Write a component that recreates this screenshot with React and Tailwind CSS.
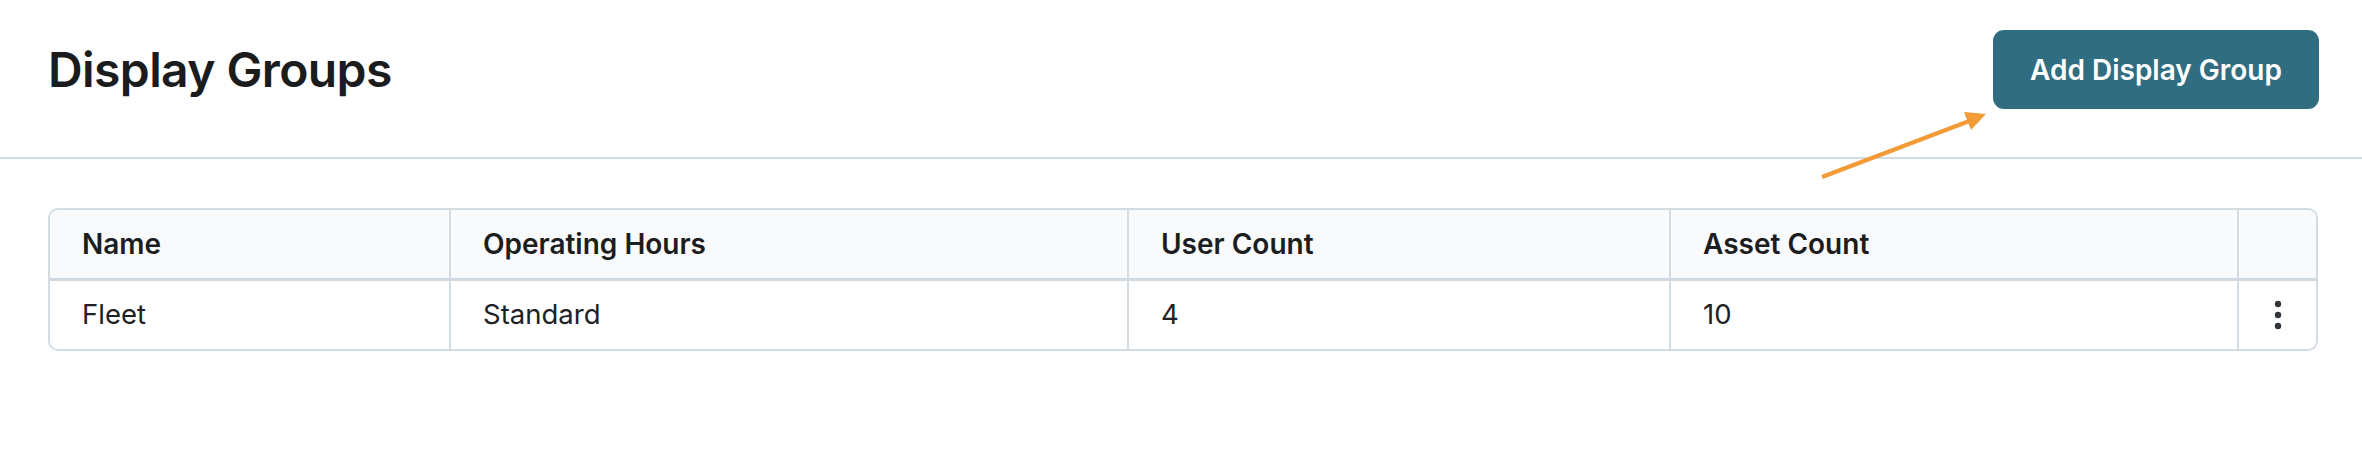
import React from "react";

const cols = [
  { key: "name", label: "Name", w: "w-[399px]" },
  { key: "hours", label: "Operating Hours", w: "w-[678px]" },
  { key: "users", label: "User Count", w: "w-[542px]" },
  { key: "assets", label: "Asset Count", w: "w-[568px]" },
];

const rows = [{ name: "Fleet", hours: "Standard", users: "4", assets: "10" }];

function Kebab() {
  return (
    <svg width="8" height="30" viewBox="0 0 8 30" className="block">
      <circle cx="4" cy="4" r="3.2" fill="#30363c" />
      <circle cx="4" cy="15" r="3.2" fill="#30363c" />
      <circle cx="4" cy="26" r="3.2" fill="#30363c" />
    </svg>
  );
}

export default function App() {
  return (
    <div
      className="relative min-h-[466px] w-[2362px] bg-white text-[#1c1d1f]"
      style={{ fontFamily: "Inter, 'Noto Sans', sans-serif" }}
    >
      <header className="flex items-center justify-between border-b-2 border-[#d3dbe3] pl-[48px] pr-[43px] pt-[30px] pb-[48px]">
        <h1 className="text-[48px] font-semibold leading-none tracking-[-0.6px] text-[#1b1c1e]">
          Display Groups
        </h1>
        <button className="flex h-[79px] w-[326px] items-center justify-center rounded-[11px] bg-[#316d81] text-[28px] font-semibold text-white">
          Add Display Group
        </button>
      </header>

      <div className="pl-[48px] pr-[44px] pt-[49px]">
        <div className="overflow-hidden rounded-[10px] border-2 border-[#d3dbe3]">
          <div className="flex h-[71px] border-b-[3px] border-[#d0d9e2] bg-[#f8fafc]">
            {cols.map((c, i) => (
              <div
                key={c.key}
                className={`${c.w} flex shrink-0 items-center px-[32px] text-[28px] font-semibold ${
                  i > 0 ? "border-l-2 border-[#d3dbe3]" : ""
                }`}
              >
                {c.label}
              </div>
            ))}
            <div className="flex-1 border-l-2 border-[#d3dbe3]" />
          </div>
          {rows.map((r) => (
            <div key={r.name} className="flex h-[68px]">
              {cols.map((c, i) => (
                <div
                  key={c.key}
                  className={`${c.w} flex shrink-0 items-center px-[32px] text-[27.5px] font-normal text-[#202124] ${
                    i > 0 ? "border-l-2 border-[#d3dbe3]" : ""
                  }`}
                >
                  {r[c.key]}
                </div>
              ))}
              <div className="flex flex-1 items-center justify-center border-l-2 border-[#d3dbe3]">
                <Kebab />
              </div>
            </div>
          ))}
        </div>
      </div>

      <svg
        className="pointer-events-none absolute left-0 top-0"
        width="2362"
        height="466"
        viewBox="0 0 2362 466"
      >
        <line x1="1822" y1="177" x2="1972" y2="120" stroke="#f29b37" strokeWidth="4.5" />
        <polygon points="1986,114 1964,112 1971,130" fill="#f29b37" />
      </svg>
    </div>
  );
}
